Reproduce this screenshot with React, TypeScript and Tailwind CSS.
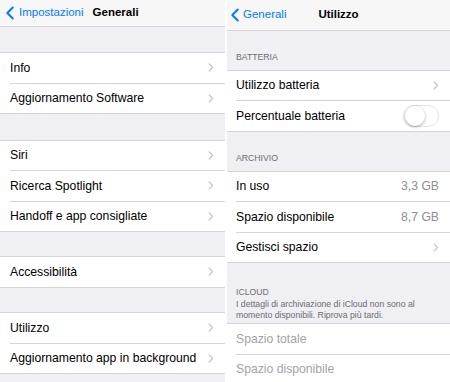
import React from "react";

type RowProps = {
  label: string;
  value?: string;
  chevron?: boolean;
  toggle?: boolean;
  disabled?: boolean;
  last?: boolean;
  inset: string;
};

function Chevron() {
  return (
    <svg width="6" height="9" viewBox="0 0 6 9" fill="none">
      <path d="M1.2 1 L4.6 4.5 L1.2 8" stroke="#c7c7cc" strokeWidth="1.2" strokeLinecap="round" strokeLinejoin="round" />
    </svg>
  );
}

function BackChevron() {
  return (
    <svg width="10" height="14" viewBox="0 0 10 14" fill="none">
      <path d="M7.8 1.5 L2.3 7 L7.8 12.5" stroke="#007aff" strokeWidth="2" strokeLinecap="round" strokeLinejoin="round" />
    </svg>
  );
}

function Toggle() {
  return (
    <div className="flex h-[22px] w-[36px] items-center rounded-full border border-[#e3e3e6] bg-white p-[0.5px]">
      <div className="h-[20px] w-[20px] rounded-full bg-white shadow-[0_1px_3px_rgba(0,0,0,0.35)]" />
    </div>
  );
}

// every row is 30.5px tall, separator included (last row's line is the group edge)
function Row({ label, value, chevron, toggle, disabled, last, inset }: RowProps) {
  return (
    <div className={`h-[30.5px] ${last ? "border-b border-[#d6d5d9]" : ""} ${inset}`}>
      <div
        className={`flex h-full items-center pr-[11px] ${last ? "" : "border-b border-[#d6d5d9]"}`}
      >
        <span className={`flex-1 text-[12.2px] ${disabled ? "text-[#a3a3a8]" : "text-black"}`}>{label}</span>
        {value && <span className="text-[12.2px] text-[#8e8e93]">{value}</span>}
        {chevron && <Chevron />}
        {toggle && <Toggle />}
      </div>
    </div>
  );
}

function Group({ children }: { children: React.ReactNode }) {
  return <div className="border-t border-[#d6d5d9] bg-white">{children}</div>;
}

function LeftScreen() {
  const inset = "pl-[10px]";
  return (
    <div className="flex w-[225px] flex-col bg-[#efeff4]">
      <div className="flex h-[27px] items-center border-b border-[#d6d5d9] bg-[#f7f7f8] pl-[5px] text-[11.5px]">
        <BackChevron />
        <span className="ml-[4px] text-[#007aff]">Impostazioni</span>
        <span className="ml-[9px] font-bold text-black">Generali</span>
      </div>
      <div className="h-[25px] shrink-0" />
      <Group>
        <Row inset={inset} label="Info" chevron />
        <Row inset={inset} label="Aggiornamento Software" chevron last />
      </Group>
      <div className="h-[25.5px] shrink-0" />
      <Group>
        <Row inset={inset} label="Siri" chevron />
        <Row inset={inset} label="Ricerca Spotlight" chevron />
        <Row inset={inset} label="Handoff e app consigliate" chevron last />
      </Group>
      <div className="h-[24px] shrink-0" />
      <Group>
        <Row inset={inset} label="Accessibilità" chevron last />
      </Group>
      <div className="h-[24.5px] shrink-0" />
      <Group>
        <Row inset={inset} label="Utilizzo" chevron />
        <Row inset={inset} label="Aggiornamento app in background" chevron last />
      </Group>
    </div>
  );
}

function RightScreen() {
  const inset = "pl-[9px]";
  return (
    <div className="flex flex-1 flex-col bg-[#efeff4]">
      <div className="grid h-[31px] shrink-0 grid-cols-[1fr_auto_1fr] items-center border-b border-[#d6d5d9] bg-[#f7f7f8] text-[11.5px]">
        <div className="flex items-center pl-[3px]">
          <BackChevron />
          <span className="ml-[3px] text-[#007aff]">Generali</span>
        </div>
        <span className="font-bold text-black">Utilizzo</span>
        <div />
      </div>
      <div className="flex h-[38.5px] shrink-0 items-end pb-[5px] pl-[9px] text-[8.7px] text-[#6d6d72]">BATTERIA</div>
      <Group>
        <Row inset={inset} label="Utilizzo batteria" chevron />
        <Row inset={inset} label="Percentuale batteria" toggle last />
      </Group>
      <div className="flex h-[39px] shrink-0 items-end pb-[5px] pl-[9px] text-[8.7px] text-[#6d6d72]">ARCHIVIO</div>
      <Group>
        <Row inset={inset} label="In uso" value="3,3 GB" />
        <Row inset={inset} label="Spazio disponibile" value="8,7 GB" />
        <Row inset={inset} label="Gestisci spazio" chevron last />
      </Group>
      <div className="flex h-[60px] shrink-0 flex-col justify-end pb-[1px] pl-[9px] text-[8.7px] leading-[11.7px] text-[#6d6d72]">
        <div>ICLOUD</div>
        <div>
          I dettagli di archiviazione di iCloud non sono al
          <br />
          momento disponibili. Riprova più tardi.
        </div>
      </div>
      <Group>
        <Row inset={inset} label="Spazio totale" disabled />
        <Row inset={inset} label="Spazio disponibile" disabled last />
      </Group>
    </div>
  );
}

export default function App() {
  return (
    <div className="flex h-[382px] w-[450px] overflow-hidden bg-white font-['Liberation_Sans',Arial,sans-serif]">
      <LeftScreen />
      <div className="w-[2px] bg-white" />
      <RightScreen />
    </div>
  );
}
